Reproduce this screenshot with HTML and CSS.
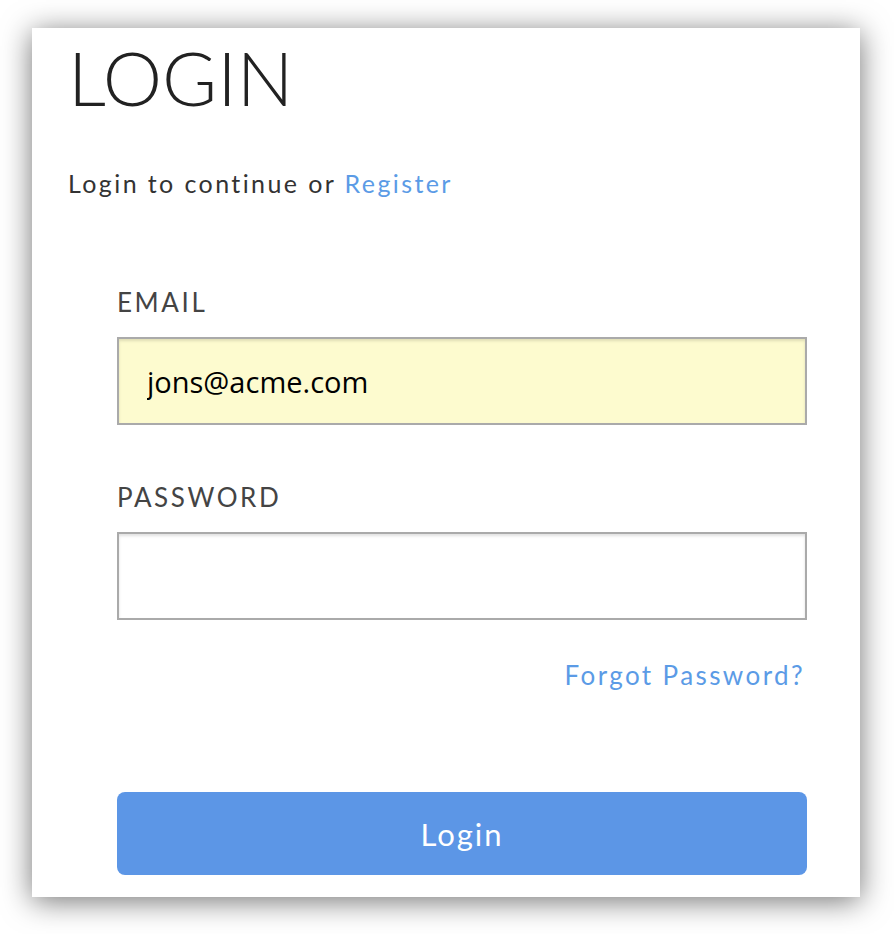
FILE: index.html
```html
<!DOCTYPE html>
<html>

<head>
  <title>Login</title>
  <meta charset="UTF-8">
  <link rel="stylesheet" href="styles.css">
</head>

<body>
  <div class="card">
    <h1 class="title">LOGIN</h1>
    <p class="intro">Login to continue or <a href="#" class="link">Register</a></p>

    <form class="fields">
      <label class="fieldLabel emailLabel" for="email">EMAIL</label>
      <input id="email" class="textBox filled" type="text" value="jons@acme.com">

      <label class="fieldLabel" for="password">PASSWORD</label>
      <input id="password" class="textBox" type="password">

      <div class="forgotRow">
        <a href="#" class="link">Forgot Password?</a>
      </div>

      <button type="button" class="loginBtn">Login</button>
    </form>
  </div>
</body>

</html>
```

FILE: styles.css
```css
body {
  margin: 0;
  padding: 28px 0 37px 32px;
  background-color: #ffffff;
  font-family: Lato, "Liberation Sans", sans-serif;
}
.card {
  width: 828px;
  height: 869px;
  box-sizing: border-box;
  padding: 12px 53px 0 36px;
  background-color: #ffffff;
  box-shadow: 0 4px 28px rgba(0, 0, 0, 0.55);
}
.title {
  margin: 0;
  font-size: 75px;
  font-weight: 300;
  line-height: 75px;
  letter-spacing: 0;
  color: #222222;
}
.intro {
  margin: 53px 0 0 0;
  font-size: 25px;
  line-height: 30px;
  letter-spacing: 2.4px;
  color: #333333;
}
.link {
  color: #5b9be6;
  text-decoration: none;
}
.fields {
  display: flex;
  flex-direction: column;
  margin: 0 0 0 49px;
}
.fieldLabel {
  margin: 57px 0 0 0;
  font-size: 26px;
  line-height: 30px;
  letter-spacing: 2.6px;
  color: #444444;
}
.emailLabel {
  margin-top: 89px;
}
.textBox {
  height: 88px;
  box-sizing: border-box;
  margin: 20px 0 0 0;
  padding: 0 28px;
  border: 2px solid #aaaaaa;
  box-shadow: inset 0 2px 3px rgba(0, 0, 0, 0.12);
  background-color: #ffffff;
  font-family: "Open Sans", "DejaVu Sans", sans-serif;
  font-size: 29px;
  color: #000000;
}
.filled {
  background-color: #fdfbcf;
}
.forgotRow {
  display: flex;
  justify-content: flex-end;
  margin: 40px 2px 0 0;
  font-size: 26px;
  line-height: 30px;
  letter-spacing: 2.4px;
}
.loginBtn {
  height: 83px;
  margin: 102px 0 0 0;
  border: none;
  border-radius: 8px;
  background-color: #5c96e6;
  color: #ffffff;
  font-family: Lato, "Liberation Sans", sans-serif;
  font-size: 31px;
  letter-spacing: 2px;
  cursor: pointer;
}
```
